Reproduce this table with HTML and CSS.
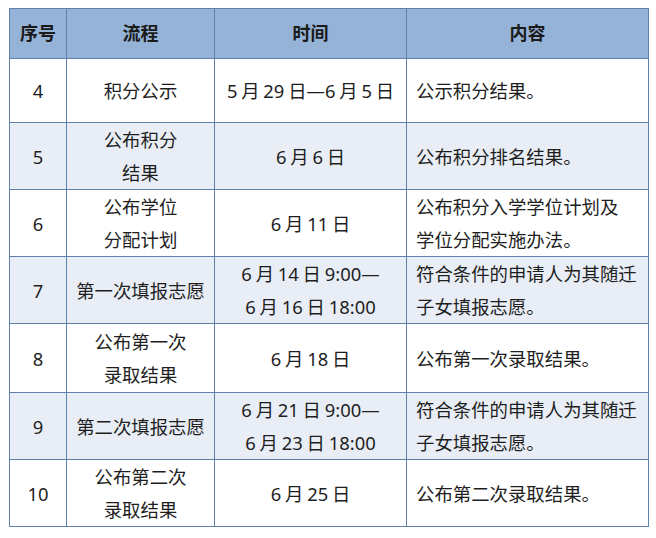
FILE: index.html
```html
<!DOCTYPE html>
<html lang="zh-CN">
<head>
<meta charset="utf-8">
<link rel="stylesheet" href="styles.css">
</head>
<body>
<div class="wrap">
<table class="sched">
  <colgroup>
    <col class="c1"><col class="c2"><col class="c3"><col class="c4">
  </colgroup>
  <thead>
    <tr class="head"><th>序号</th><th>流程</th><th>时间</th><th>内容</th></tr>
  </thead>
  <tbody>
    <tr class="r64"><td>4</td><td>积分公示</td><td class="time">5 月 29 日—6 月 5 日</td><td class="left">公示积分结果。</td></tr>
    <tr class="r67 alt"><td>5</td><td>公布积分<br>结果</td><td class="time">6 月 6 日</td><td class="left">公布积分排名结果。</td></tr>
    <tr class="r67"><td>6</td><td>公布学位<br>分配计划</td><td class="time">6 月 11 日</td><td class="left">公布积分入学学位计划及<br>学位分配实施办法。</td></tr>
    <tr class="r67 alt"><td>7</td><td>第一次填报志愿</td><td class="time">6 月 14 日 9:00—<br>6 月 16 日 18:00</td><td class="left">符合条件的申请人为其随迁<br>子女填报志愿。</td></tr>
    <tr class="r69"><td>8</td><td>公布第一次<br>录取结果</td><td class="time">6 月 18 日</td><td class="left">公布第一次录取结果。</td></tr>
    <tr class="r67 alt"><td>9</td><td>第二次填报志愿</td><td class="time">6 月 21 日 9:00—<br>6 月 23 日 18:00</td><td class="left">符合条件的申请人为其随迁<br>子女填报志愿。</td></tr>
    <tr class="r67"><td>10</td><td>公布第二次<br>录取结果</td><td class="time">6 月 25 日</td><td class="left">公布第二次录取结果。</td></tr>
  </tbody>
</table>
</div>
</body>
</html>
```

FILE: styles.css
```css
html, body {
  margin: 0;
  padding: 0;
  background: #ffffff;
}
.wrap {
  padding: 8px 0 0 9px;
}
.sched {
  border-collapse: collapse;
  table-layout: fixed;
  width: 639px;
  font-family: "Noto Sans", "Noto Sans CJK SC", sans-serif;
  font-size: 18.4px;
  color: #1e1e1e;
}
.c1 { width: 57px; }
.c2 { width: 148px; }
.c3 { width: 192px; }
.c4 { width: 242px; }
.sched th, .sched td {
  border: 1px solid #5f82ad;
  text-align: center;
  vertical-align: middle;
  padding: 0 4px;
  line-height: 33px;
}
.sched th {
  background: #95b3d7;
  font-weight: 700;
  font-size: 18px;
  color: #1a1a1a;
}
.head { height: 50px; }
.r64 { height: 64px; }
.r67 { height: 67px; }
.r69 { height: 69px; }
.alt td { background: #e9eef6; }
.sched td.time {
  word-spacing: -1px;
}
.sched td.left {
  text-align: left;
  padding-left: 9px;
}
```
